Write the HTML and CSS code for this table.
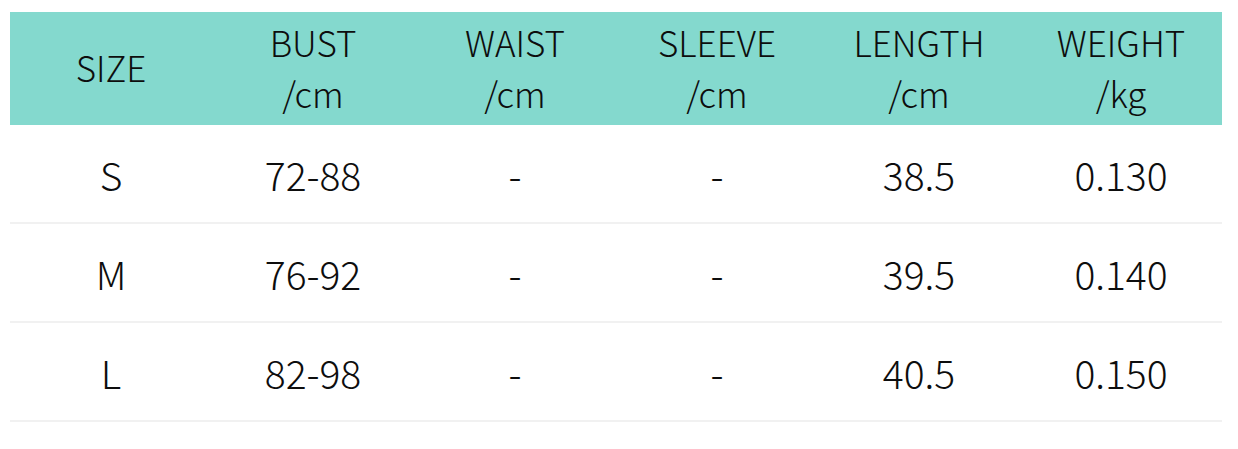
FILE: index.html
```html
<!DOCTYPE html>
<html>
<head>
<meta charset="utf-8">
<link rel="stylesheet" href="styles.css">
</head>
<body>
<div class="chart">
  <div class="row head">
    <div class="cell">SIZE</div>
    <div class="cell">BUST<br>/cm</div>
    <div class="cell">WAIST<br>/cm</div>
    <div class="cell">SLEEVE<br>/cm</div>
    <div class="cell">LENGTH<br>/cm</div>
    <div class="cell">WEIGHT<br>/kg</div>
  </div>
  <div class="row body">
    <div class="cell">S</div>
    <div class="cell">72-88</div>
    <div class="cell">-</div>
    <div class="cell">-</div>
    <div class="cell">38.5</div>
    <div class="cell">0.130</div>
  </div>
  <div class="row body">
    <div class="cell">M</div>
    <div class="cell">76-92</div>
    <div class="cell">-</div>
    <div class="cell">-</div>
    <div class="cell">39.5</div>
    <div class="cell">0.140</div>
  </div>
  <div class="row body">
    <div class="cell">L</div>
    <div class="cell">82-98</div>
    <div class="cell">-</div>
    <div class="cell">-</div>
    <div class="cell">40.5</div>
    <div class="cell">0.150</div>
  </div>
</div>
</body>
</html>
```
FILE: styles.css
```css
html, body {
  margin: 0;
  padding: 0;
  background: #ffffff;
}
body {
  font-family: "Noto Sans CJK SC", "Noto Sans", sans-serif;
  font-weight: 300;
  color: #0d0d0d;
}
.chart {
  margin: 12px 0 0 10px;
  width: 1212px;
}
.row {
  display: grid;
  grid-template-columns: repeat(6, 1fr);
}
.cell {
  display: flex;
  align-items: center;
  justify-content: center;
  text-align: center;
}
.head {
  background: #84d9ce;
  height: 113px;
  font-size: 35px;
  line-height: 51px;
  padding-bottom: 4px;
  box-sizing: border-box;
}
.body {
  height: 97px;
  border-bottom: 2px solid #f1f1f1;
  font-size: 39px;
}
```
